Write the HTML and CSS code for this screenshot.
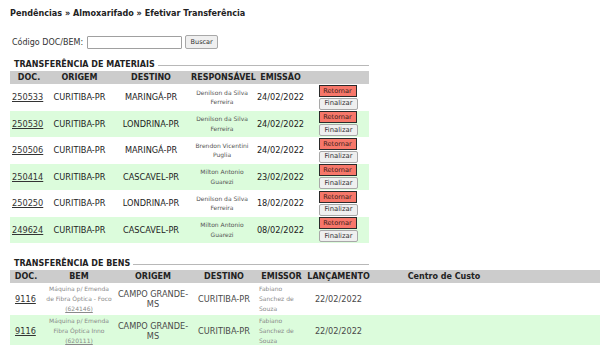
FILE: index.html
```html
<!DOCTYPE html>
<html lang="pt-BR">
<head>
<meta charset="utf-8">
<title>Efetivar Transferência</title>
<link rel="stylesheet" href="styles.css">
</head>
<body>
<div class="page">
  <h1 class="crumbs">Pendências » Almoxarifado » Efetivar Transferência</h1>

  <form class="search">
    <label class="search-label" for="cod">Código DOC/BEM:</label>
    <input class="search-input" id="cod" type="text">
    <button class="btn-search" type="button">Buscar</button>
  </form>

  <div class="section-head"><span class="section-title">TRANSFERÊNCIA DE MATERIAIS</span><span class="section-line"></span></div>
  <table class="grid mat">
    <colgroup>
      <col class="c-doc"><col class="c-orig"><col class="c-dest"><col class="c-resp"><col class="c-emis"><col class="c-act">
    </colgroup>
    <thead>
      <tr><th>DOC.</th><th>ORIGEM</th><th>DESTINO</th><th>RESPONSÁVEL</th><th>EMISSÃO</th><th></th></tr>
    </thead>
    <tbody>
      <tr>
        <td class="doc"><a href="#">250533</a></td><td>CURITIBA-PR</td><td>MARINGÁ-PR</td>
        <td class="small">Denilson da Silva Ferreira</td><td>24/02/2022</td>
        <td><div class="acts"><button class="btn-ret" type="button">Retornar</button><button class="btn-fin" type="button">Finalizar</button></div></td>
      </tr>
      <tr class="alt">
        <td class="doc"><a href="#">250530</a></td><td>CURITIBA-PR</td><td>LONDRINA-PR</td>
        <td class="small">Denilson da Silva Ferreira</td><td>24/02/2022</td>
        <td><div class="acts"><button class="btn-ret" type="button">Retornar</button><button class="btn-fin" type="button">Finalizar</button></div></td>
      </tr>
      <tr>
        <td class="doc"><a href="#">250506</a></td><td>CURITIBA-PR</td><td>MARINGÁ-PR</td>
        <td class="small">Brendon Vicentini Puglia</td><td>24/02/2022</td>
        <td><div class="acts"><button class="btn-ret" type="button">Retornar</button><button class="btn-fin" type="button">Finalizar</button></div></td>
      </tr>
      <tr class="alt">
        <td class="doc"><a href="#">250414</a></td><td>CURITIBA-PR</td><td>CASCAVEL-PR</td>
        <td class="small">Milton Antonio Guarezi</td><td>23/02/2022</td>
        <td><div class="acts"><button class="btn-ret" type="button">Retornar</button><button class="btn-fin" type="button">Finalizar</button></div></td>
      </tr>
      <tr>
        <td class="doc"><a href="#">250250</a></td><td>CURITIBA-PR</td><td>LONDRINA-PR</td>
        <td class="small">Denilson da Silva Ferreira</td><td>18/02/2022</td>
        <td><div class="acts"><button class="btn-ret" type="button">Retornar</button><button class="btn-fin" type="button">Finalizar</button></div></td>
      </tr>
      <tr class="alt">
        <td class="doc"><a href="#">249624</a></td><td>CURITIBA-PR</td><td>CASCAVEL-PR</td>
        <td class="small">Milton Antonio Guarezi</td><td>08/02/2022</td>
        <td><div class="acts"><button class="btn-ret" type="button">Retornar</button><button class="btn-fin" type="button">Finalizar</button></div></td>
      </tr>
    </tbody>
  </table>

  <div class="section-head bens-head"><span class="section-title">TRANSFERÊNCIA DE BENS</span><span class="section-line"></span></div>
  <table class="grid bens">
    <colgroup>
      <col class="b-doc"><col class="b-bem"><col class="b-orig"><col class="b-dest"><col class="b-emi"><col class="b-lan"><col class="b-cc"><col class="b-rest">
    </colgroup>
    <thead>
      <tr><th>DOC.</th><th>BEM</th><th>ORIGEM</th><th>DESTINO</th><th>EMISSOR</th><th>LANÇAMENTO</th><th>Centro de Custo</th><th></th></tr>
    </thead>
    <tbody>
      <tr>
        <td class="doc"><a href="#">9116</a></td>
        <td class="bem"><span class="bem-text">Máquina p/ Emenda de Fibra Óptica - Foco <a href="#">(624146)</a></span></td>
        <td class="place">CAMPO GRANDE-MS</td><td>CURITIBA-PR</td>
        <td class="emi">Fabiano Sanchez de Souza</td><td>22/02/2022</td><td></td><td></td>
      </tr>
      <tr class="alt">
        <td class="doc"><a href="#">9116</a></td>
        <td class="bem"><span class="bem-text">Máquina p/ Emenda Fibra Óptica Inno <a href="#">(620111)</a></span></td>
        <td class="place">CAMPO GRANDE-MS</td><td>CURITIBA-PR</td>
        <td class="emi">Fabiano Sanchez de Souza</td><td>22/02/2022</td><td></td><td></td>
      </tr>
    </tbody>
  </table>
</div>
</body>
</html>
```

FILE: styles.css
```css
html, body {
  margin: 0;
  padding: 0;
  overflow: hidden;
  background: #ffffff;
}

body {
  font-family: "DejaVu Sans", Verdana, sans-serif;
  font-size: 8px;
  color: #222;
}

.page {
  padding: 8px 0 0 10px;
}

.crumbs {
  margin: 0;
  font-size: 8.1px;
  line-height: 10px;
  font-weight: bold;
  color: #222;
}

.search {
  display: flex;
  align-items: center;
  margin: 17px 0 0 2px;
  height: 14px;
}

.search-label {
  font-size: 8px;
  color: #333;
  margin-right: 4px;
}

.search-input {
  box-sizing: border-box;
  width: 95px;
  height: 13px;
  border: 1px solid #a0a0a0;
  border-radius: 1px;
  padding: 0 2px;
  margin: 0 3px 0 0;
  font-size: 7px;
}

.btn-search {
  box-sizing: border-box;
  height: 14px;
  width: 33px;
  padding: 0;
  margin: 0;
  border: 1px solid #a8a8a8;
  border-radius: 2px;
  background: #efefef;
  font-family: "DejaVu Sans", Verdana, sans-serif;
  font-size: 6.5px;
  color: #333;
}

.section-head {
  display: flex;
  align-items: center;
  width: 359px;
  margin-top: 11px;
  height: 10px;
}

.section-title {
  font-weight: bold;
  font-size: 8px;
  line-height: 10px;
  color: #222;
  padding-left: 4px;
  white-space: nowrap;
}

.section-line {
  flex: 1;
  height: 1px;
  background: #b8b8b8;
  margin-left: 3px;
}

.grid {
  border-collapse: collapse;
  table-layout: fixed;
  margin-top: 1px;
}

.grid th {
  background: #cccccc;
  font-weight: bold;
  font-size: 8px;
  height: 13px;
  padding: 0;
  text-align: center;
  color: #222;
  white-space: nowrap;
}

.grid td {
  padding: 0 1px;
  text-align: center;
  vertical-align: middle;
  font-size: 8.2px;
  color: #222;
}

.grid tr.alt td {
  background: #dcfcdc;
}

.grid td.doc {
  text-align: left;
  padding-left: 2px;
}

.grid td.doc a {
  color: #333;
  text-decoration: underline;
}

/* Materiais */
.mat { width: 359px; }
.mat tbody tr { height: 26.5px; }
.c-doc { width: 38px; }
.c-orig { width: 63px; }
.c-dest { width: 80px; }
.c-resp { width: 62px; }
.c-emis { width: 55px; }
.c-act { width: 61px; }

.grid td.small {
  font-size: 6px;
  line-height: 9.5px;
  color: #555;
}

.acts {
  display: flex;
  flex-direction: column;
  align-items: center;
}

.btn-ret {
  box-sizing: border-box;
  width: 38px;
  height: 12px;
  padding: 0;
  margin: 0 2px 0 0;
  border: 1.5px solid #2a2a2a;
  background: #f7776a;
  font-family: "DejaVu Sans", Verdana, sans-serif;
  font-size: 6.6px;
  line-height: 8px;
  color: #3a1c18;
}

.btn-fin {
  box-sizing: border-box;
  width: 39px;
  height: 12px;
  padding: 0;
  margin: 1px 0 0 0;
  border: 1px solid #a8a8a8;
  border-radius: 2px;
  background: #efefef;
  font-family: "DejaVu Sans", Verdana, sans-serif;
  font-size: 6.8px;
  line-height: 9px;
  color: #333;
}

/* Bens */
.bens-head { margin-top: 16px; }
.bens { width: 590px; }
.bens tbody tr { height: 32px; }
.b-doc { width: 32px; }
.b-bem { width: 74px; }
.b-orig { width: 74px; }
.b-dest { width: 68px; }
.b-emi { width: 47px; }
.b-lan { width: 67px; }
.b-cc { width: 144px; }
.b-rest { width: 84px; }

.bens td { color: #4a4a4a; }

.bens td.doc { padding-left: 5px; }

.grid td.place {
  padding: 0;
  line-height: 10px;
}

.bem-text {
  display: block;
  width: 66px;
  margin: 0 auto;
  font-size: 6px;
  line-height: 10px;
  color: #8a8a8a;
}

.bem-text a {
  color: #8a8a8a;
  text-decoration: underline;
}

.grid td.emi {
  text-align: left;
  font-size: 6px;
  line-height: 10px;
  color: #8a8a8a;
}
```
